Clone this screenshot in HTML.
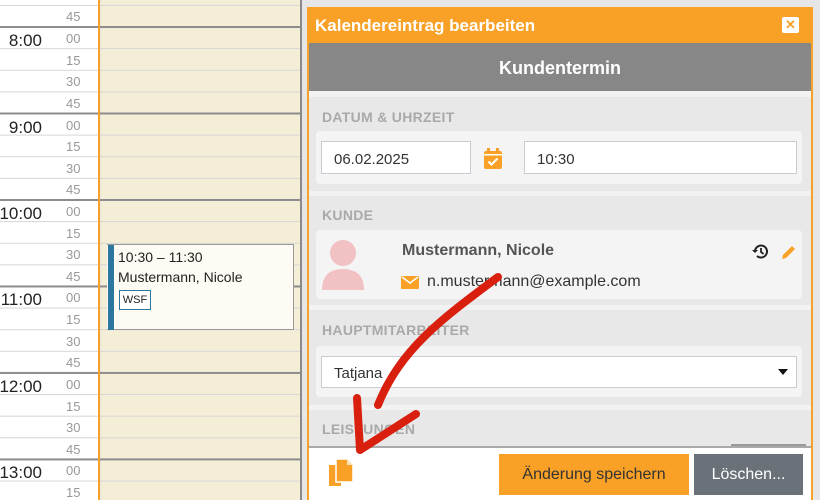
<!DOCTYPE html>
<html><head><meta charset="utf-8"><style>
*{box-sizing:border-box;margin:0;padding:0}
body{width:820px;height:500px;overflow:hidden;background:#e6e6e6;font-family:"Liberation Sans",sans-serif;position:relative}
.abs{position:absolute}
.lbl{position:absolute;left:322px;font-size:14px;font-weight:bold;color:#a9a9a9;letter-spacing:.3px}
.panel{position:absolute;left:316px;width:486px;background:#f4f4f4;border-radius:4px}
.inp{position:absolute;background:#fff;border:1px solid #c9ccd2;font-size:15px;color:#333;padding-left:12px;line-height:36px}
</style></head><body>
<div class="abs" style="left:0;top:0;width:99px;height:500px;background:#fff"></div>
<div class="abs" style="left:101px;top:0;width:200px;height:500px;background:#f5eed6"></div>
<svg class="abs" style="left:0;top:0" width="303" height="500">
<g id="rows"></g>
</svg>
<div id="cal"></div>
<div class="abs" style="left:98px;top:0;width:2px;height:500px;background:#f9a126"></div>
<div class="abs" style="left:300px;top:0;width:2px;height:500px;background:#8a8a8a"></div>
<!-- event -->
<div class="abs" style="left:107px;top:244px;width:187px;height:86px;background:#fdfbf3;border:1px solid #999;border-left:none"></div>
<div class="abs" style="left:108px;top:245px;width:6px;height:85px;background:#2b77a0"></div>
<div class="abs" style="left:118px;top:247px;font-size:14px;color:#222;line-height:20px">10:30 – 11:30<br>Mustermann, Nicole</div>
<div class="abs" style="left:119px;top:290px;width:32px;height:20px;border:1px solid #2b77a0;background:#fff;font-size:11px;text-align:center;line-height:18px;color:#222">WSF</div>
<!-- dialog -->
<div class="abs" style="left:307px;top:7px;width:506px;height:493px;background:#e8e8e8;border:2px solid #f9a126;border-top:none"></div>
<div class="abs" style="left:307px;top:7px;width:506px;height:36px;background:#f9a126;color:#fff;font-weight:bold;font-size:17px;line-height:38px;padding-left:8px">Kalendereintrag bearbeiten</div>
<div class="abs" style="left:782px;top:17px;width:17px;height:16px;background:#fff;border-radius:2px;color:#f9a126;font-size:13px;font-weight:bold;text-align:center;line-height:16px">✕</div>
<div class="abs" style="left:309px;top:43px;width:502px;height:48px;background:#878787;color:#fff;font-weight:bold;font-size:18px;text-align:center;line-height:50px">Kundentermin</div>
<div class="abs" style="left:309px;top:91px;width:502px;height:6px;background:#f2f2f2"></div>
<div class="lbl" style="top:109px">DATUM &amp; UHRZEIT</div>
<div class="panel" style="top:131px;height:53px"></div>
<div class="inp" style="left:321px;top:141px;width:150px;height:33px">06.02.2025</div>
<svg class="abs" style="left:483px;top:148px" width="20" height="22" viewBox="0 0 20 22"><rect x="1" y="3" width="18" height="18" rx="2" fill="#f9a126"/><rect x="4" y="0" width="3" height="5" fill="#f9a126"/><rect x="13" y="0" width="3" height="5" fill="#f9a126"/><rect x="1" y="6" width="18" height="1.5" fill="#fff"/><path d="M5.5 13.5l3 3 6-6" stroke="#fff" stroke-width="2.2" fill="none"/></svg>
<div class="inp" style="left:524px;top:141px;width:273px;height:33px">10:30</div>
<div class="abs" style="left:309px;top:191px;width:502px;height:5px;background:#f2f2f2"></div>
<div class="lbl" style="top:207px">KUNDE</div>
<div class="panel" style="top:230px;height:69px"></div>
<svg class="abs" style="left:320px;top:240px" width="46" height="52"><circle cx="23" cy="13" r="13" fill="#f2c1c4"/><path d="M2 50 Q2 29 23 29 Q44 29 44 50Z" fill="#f2c1c4"/></svg>
<div class="abs" style="left:402px;top:242px;font-size:16px;font-weight:bold;color:#555">Mustermann, Nicole</div>
<svg class="abs" style="left:401px;top:276px" width="18" height="13"><rect width="18" height="13" rx="1" fill="#f9a126"/><path d="M1 1l8 6 8-6" stroke="#fff" stroke-width="1.6" fill="none"/></svg>
<div class="abs" style="left:427px;top:273px;font-size:16px;color:#333">n.mustermann@example.com</div>
<svg class="abs" style="left:752px;top:243px" width="17" height="17" viewBox="0 0 17 17"><path d="M3 8.5A6 6 0 1 1 5 13" stroke="#222" stroke-width="2" fill="none"/><path d="M0 7l3 3 3-3z" fill="#222"/><path d="M9 5v4l2.5 2" stroke="#222" stroke-width="1.8" fill="none"/></svg>
<svg class="abs" style="left:780px;top:243px" width="18" height="18"><path d="M2 16l1-4 9-9 3 3-9 9z" fill="#f9a126"/></svg>
<div class="abs" style="left:309px;top:305px;width:502px;height:5px;background:#f2f2f2"></div>
<div class="lbl" style="top:322px">HAUPTMITARBEITER</div>
<div class="panel" style="top:346px;height:51px"></div>
<div class="inp" style="left:321px;top:356px;width:476px;height:32px;line-height:34px">Tatjana</div>
<div class="abs" style="left:778px;top:369px;width:0;height:0;border-left:5px solid transparent;border-right:5px solid transparent;border-top:6px solid #111"></div>
<div class="abs" style="left:309px;top:405px;width:502px;height:5px;background:#f2f2f2"></div>
<div class="lbl" style="top:421px">LEISTUNGEN</div>
<div class="abs" style="left:731px;top:444px;width:75px;height:3px;background:#999"></div>
<div class="abs" style="left:309px;top:446px;width:502px;height:54px;background:#fff;border-top:2px solid #aaa"></div>
<svg class="abs" style="left:328px;top:458px" width="26" height="29" viewBox="0 0 26 29"><path d="M1 7h12v21H1z" fill="#f9a126"/><path d="M8 1h11l6 6v17H8z" fill="#f9a126" stroke="#fff" stroke-width="1.5"/><path d="M19 1v6h6" fill="#fde1b3"/></svg>
<div class="abs" style="left:499px;top:454px;width:190px;height:41px;background:#f9a126;color:#333;font-size:16px;text-align:center;line-height:41px">Änderung speichern</div>
<div class="abs" style="left:694px;top:454px;width:109px;height:41px;background:#6a7178;color:#fff;font-size:16px;text-align:center;line-height:41px">Löschen...</div>
<!-- red arrow -->
<svg class="abs" style="left:0;top:0" width="820" height="500"><path d="M498 277 C440 320 400 350 378 405" stroke="#d9200f" stroke-width="8" fill="none" stroke-linecap="round"/><path d="M357 398 L360 450 L416 414" stroke="#d9200f" stroke-width="8" fill="none" stroke-linecap="round" stroke-linejoin="round"/></svg>
<script>
var g=document.getElementById('rows'),s='',c='';
var labs=['45','00','15','30','45','00','15','30','45','00','15','30','45','00','15','30','45','00','15','30','45','00','15'];
var hrs={1:'8:00',5:'9:00',9:'10:00',13:'11:00',17:'12:00',21:'13:00'};
for(var i=0;i<24;i++){var y=5.4+i*21.62;var hr=(i%4==1);
s+='<rect x="0" y="'+(y-(hr?1:0.5))+'" width="302" height="'+(hr?2:1)+'" fill="'+(hr?'#8c8c8c':'#d6d6d6')+'"/>';}
g.innerHTML=s;
for(var i=0;i<23;i++){var y=5.4+i*21.62;
c+='<div class="abs" style="left:66px;top:'+(y+4)+'px;font-size:13px;color:#999">'+labs[i]+'</div>';
if(hrs[i])c+='<div class="abs" style="right:'+(820-42)+'px;top:'+(y+4)+'px;font-size:17px;color:#222">'+hrs[i]+'</div>';}
document.getElementById('cal').innerHTML=c;
</script>
</body></html>
